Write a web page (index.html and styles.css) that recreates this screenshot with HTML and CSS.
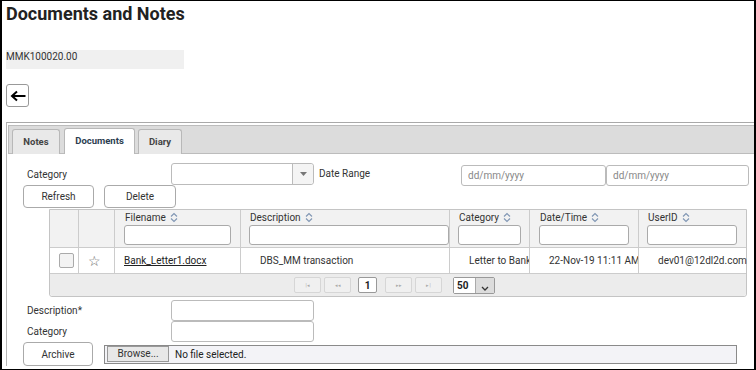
FILE: index.html
```html
<!DOCTYPE html>
<html>
<head>
<meta charset="utf-8">
<link rel="stylesheet" href="styles.css">
</head>
<body>
<div class="frame">
  <h1 class="title">Documents and Notes</h1>
  <div class="account">MMK100020.00</div>
  <button class="back" aria-label="Back">
    <svg width="16" height="12" viewBox="0 0 16 12"><path d="M15.5 6H2.5M7 1.5L2 6l5 4.5" fill="none" stroke="#000" stroke-width="2"/></svg>
  </button>

  <div class="panel">
    <div class="tabbar">
      <div class="tab t-notes">Notes</div>
      <div class="tab t-docs active">Documents</div>
      <div class="tab t-diary">Diary</div>
    </div>
    <div class="content">
      <div class="filter-row">
        <span class="lbl">Category</span>
        <div class="select"><span class="sel-val"></span><span class="sel-arrow"><svg width="7" height="4" viewBox="0 0 7 4"><path d="M0 0h7L3.5 4z" fill="#777"/></svg></span></div>
        <span class="lbl2">Date Range</span>
        <div class="date">dd/mm/yyyy</div>
        <div class="date d2">dd/mm/yyyy</div>
      </div>
      <div class="btn-row">
        <button class="btn b1">Refresh</button>
        <button class="btn b2">Delete</button>
      </div>

      <div class="grid">
        <div class="hrow">
          <div class="c c1"></div>
          <div class="c c2"></div>
          <div class="c c3"><div class="hl">Filename <svg class="sort" width="8" height="11" viewBox="0 0 8 11"><path d="M1 4.5L4 1.5 7 4.5M1 6.5l3 3 3-3" fill="none" stroke="#7f95b3" stroke-width="1.1"/></svg></div><div class="fi w3"></div></div>
          <div class="c c4"><div class="hl">Description <svg class="sort" width="8" height="11" viewBox="0 0 8 11"><path d="M1 4.5L4 1.5 7 4.5M1 6.5l3 3 3-3" fill="none" stroke="#7f95b3" stroke-width="1.1"/></svg></div><div class="fi w4"></div></div>
          <div class="c c5"><div class="hl">Category <svg class="sort" width="8" height="11" viewBox="0 0 8 11"><path d="M1 4.5L4 1.5 7 4.5M1 6.5l3 3 3-3" fill="none" stroke="#7f95b3" stroke-width="1.1"/></svg></div><div class="fi w5"></div></div>
          <div class="c c6"><div class="hl">Date/Time <svg class="sort" width="8" height="11" viewBox="0 0 8 11"><path d="M1 4.5L4 1.5 7 4.5M1 6.5l3 3 3-3" fill="none" stroke="#7f95b3" stroke-width="1.1"/></svg></div><div class="fi w6"></div></div>
          <div class="c c7"><div class="hl">UserID <svg class="sort" width="8" height="11" viewBox="0 0 8 11"><path d="M1 4.5L4 1.5 7 4.5M1 6.5l3 3 3-3" fill="none" stroke="#7f95b3" stroke-width="1.1"/></svg></div><div class="fi w6"></div></div>
        </div>
        <div class="drow">
          <div class="c c1"><span class="chk"></span></div>
          <div class="c c2"><span class="star">☆</span></div>
          <div class="c c3"><a class="link">Bank_Letter1.docx</a></div>
          <div class="c c4 t">DBS_MM transaction</div>
          <div class="c c5 t">Letter to Bank</div>
          <div class="c c6 t">22-Nov-19 11:11 AM</div>
          <div class="c c7 t">dev01@12dl2d.com</div>
        </div>
        <div class="pager">
          <span class="pb">|◂</span>
          <span class="pb">◂◂</span>
          <span class="pb cur">1</span>
          <span class="pb">▸▸</span>
          <span class="pb">▸|</span>
          <span class="psel"><span class="pv">50</span><span class="pa"><svg width="8" height="5" viewBox="0 0 8 5"><path d="M1 1l3 3 3-3" fill="none" stroke="#333" stroke-width="1.3"/></svg></span></span>
        </div>
      </div>

      <div class="form-row fr1">
        <span class="lbl">Description*</span>
        <div class="inp"></div>
      </div>
      <div class="form-row">
        <span class="lbl">Category</span>
        <div class="inp"></div>
      </div>
      <div class="arch-row">
        <button class="btn archive">Archive</button>
        <div class="file"><span class="browse">Browse...</span><span class="nofile">No file selected.</span></div>
      </div>
    </div>
  </div>
</div>
</body>
</html>
```
FILE: styles.css
```css
* { box-sizing: border-box; }
body { margin: 0; font-family: Roboto, "Liberation Sans", Arial, sans-serif; color: #333; font-size: 10px; }
.frame { width: 756px; height: 370px; border: 1px solid #000; border-left-width: 2px; border-right-width: 2px; overflow: hidden; padding-left: 4px; background: #fff; }
.title { margin: 2px 0 0; font-size: 18px; line-height: 22px; font-weight: 700; color: #222; }
.account { margin-top: 25px; width: 178px; height: 19px; background: #f0f0f0; font-size: 10px; line-height: 12px; padding-top: 1px; color: #333; }
.back { display: flex; align-items: center; justify-content: center; margin-top: 15px; width: 23px; height: 23px; padding: 0; background: #fff; border: 1px solid #999; border-radius: 3px; }
.panel { margin-top: 15px; width: 760px; border-top: 1px solid #a9a9a9; border-left: 1px solid #b5b5b5; padding: 2px 0 0 1px; }
.tabbar { height: 29px; background: #dcdcdc; border: 1px solid #bcbcbc; border-right: none; display: flex; align-items: flex-end; padding-left: 3px; gap: 3px; }
.tab { height: 25px; margin-bottom: -1px; border: 1px solid #b8b8b8; border-bottom: none; border-radius: 3px 3px 0 0; background: #e9e9e9; font-weight: 700; font-size: 9.5px; color: #444; padding: 0; text-align: center; line-height: 24px; }
.t-notes { width: 48px; }
.t-docs { width: 71px; margin-left: 1px; }
.t-diary { width: 44px; }
.tab.active { background: #fff; color: #2c3e50; height: 26px; }
.content { padding-left: 15px; padding-top: 9px; }
.filter-row { display: flex; align-items: center; height: 22px; }
.lbl { width: 148px; padding-left: 4px; color: #333; }
.select { width: 143px; height: 22px; border: 1px solid #bbb; border-radius: 3px; display: flex; }
.sel-val { flex: 1; }
.sel-arrow { width: 21px; border-left: 1px solid #bbb; background: #f4f4f4; display: flex; align-items: center; justify-content: center; border-radius: 0 3px 3px 0; }
.lbl2 { width: 147px; padding-left: 5px; margin-top: -2px; }
.date { width: 145px; height: 21px; margin-top: 2px; border: 1px solid #bbb; border-radius: 3px; color: #888; padding-left: 6px; line-height: 19px; }
.date.d2 { width: 143px; }
.btn-row { display: flex; gap: 10px; height: 23px; }
.btn { height: 23px; background: #fff; border: 1px solid #aaa; border-radius: 4px; font-family: inherit; font-size: 10px; color: #333; padding: 0; }
.b1 { width: 71px; }
.b2 { width: 72px; }
.grid { margin: 1px 0 0 26px; width: 698px; border: 1px solid #c4c4c4; border-radius: 0 0 3px 3px; }
.hrow, .drow { display: flex; }
.hrow { height: 38px; background: #f2f2f2; border-bottom: 1px solid #ccc; }
.drow { height: 26px; border-bottom: 1px solid #ccc; }
.c { border-right: 1px solid #ccc; flex: none; overflow: hidden; white-space: nowrap; }
.c7 { border-right: none; }
.c1 { width: 29px; }
.c2 { width: 36px; }
.c3 { width: 126px; padding-left: 9px; }
.c4 { width: 209px; padding-left: 8px; }
.c5 { width: 80px; padding-left: 8px; }
.c6 { width: 109px; padding-left: 9px; }
.c7 { width: 108px; padding-left: 8px; }
.hl { height: 15px; line-height: 15px; padding-left: 1px; display: flex; align-items: center; gap: 4px; }
.sort { flex: none; }
.fi { height: 20px; background: #fff; border: 1px solid #aaa; border-radius: 3px; margin-top: 0px; }
.w3 { width: 107px; }
.w4 { width: 200px; }
.w5 { width: 63px; }
.w6 { width: 90px; }
.drow .c { display: flex; align-items: center; }
.drow .t { padding-left: 19px; }
.drow .c3 { padding-left: 9px; }
.chk { width: 15px; height: 15px; margin-left: 9px; border: 1px solid #aaa; border-radius: 2px; background: #f3f3f3; }
.star { margin-left: 9px; font-size: 14px; color: #666; font-family: "DejaVu Sans", sans-serif; }
.link { text-decoration: underline; color: #222; }
.pager { height: 22px; background: #ececec; display: flex; align-items: center; padding-left: 244px; border-radius: 0 0 3px 3px; }
.pb { width: 27px; height: 16px; border: 1px solid #d6d6d6; border-radius: 2px; margin-right: 3px; font-size: 5px; color: #aaa; display: flex; align-items: center; justify-content: center; background: #f0f0f0; }
.pb:nth-child(2) { margin-right: 7px; }
.pb.cur { width: 19px; margin-right: 8px; border-color: #999; background: #fff; color: #222; font-size: 10px; font-weight: 700; }
.pb:nth-child(5) { margin-right: 11px; }
.psel { display: flex; height: 17px; width: 42px; border: 1px solid #999; border-radius: 2px; }
.pv { width: 21px; font-weight: 700; font-size: 10px; color: #222; padding-left: 3px; line-height: 15px; background: #fff; }
.pa { flex: 1; background: #dcdcdc; border-left: 1px solid #aaa; display: flex; align-items: flex-end; justify-content: center; padding-bottom: 2px; }
.form-row { display: flex; align-items: center; height: 21px; }
.fr1 { margin-top: 3px; }
.inp { width: 143px; height: 21px; border: 1px solid #bbb; border-radius: 3px; }
.arch-row { display: flex; align-items: center; height: 24px; }
.archive { width: 70px; height: 24px; }
.file { margin-left: 11px; width: 633px; height: 19px; border: 1px solid #8a8a8a; background: #f3f3f7; display: flex; align-items: center; padding-left: 2px; }
.browse { width: 62px; height: 16px; border: 1px solid #999; background: #e8e8e8; text-align: center; line-height: 14px; }
.nofile { margin-left: 6px; color: #222; }
```
